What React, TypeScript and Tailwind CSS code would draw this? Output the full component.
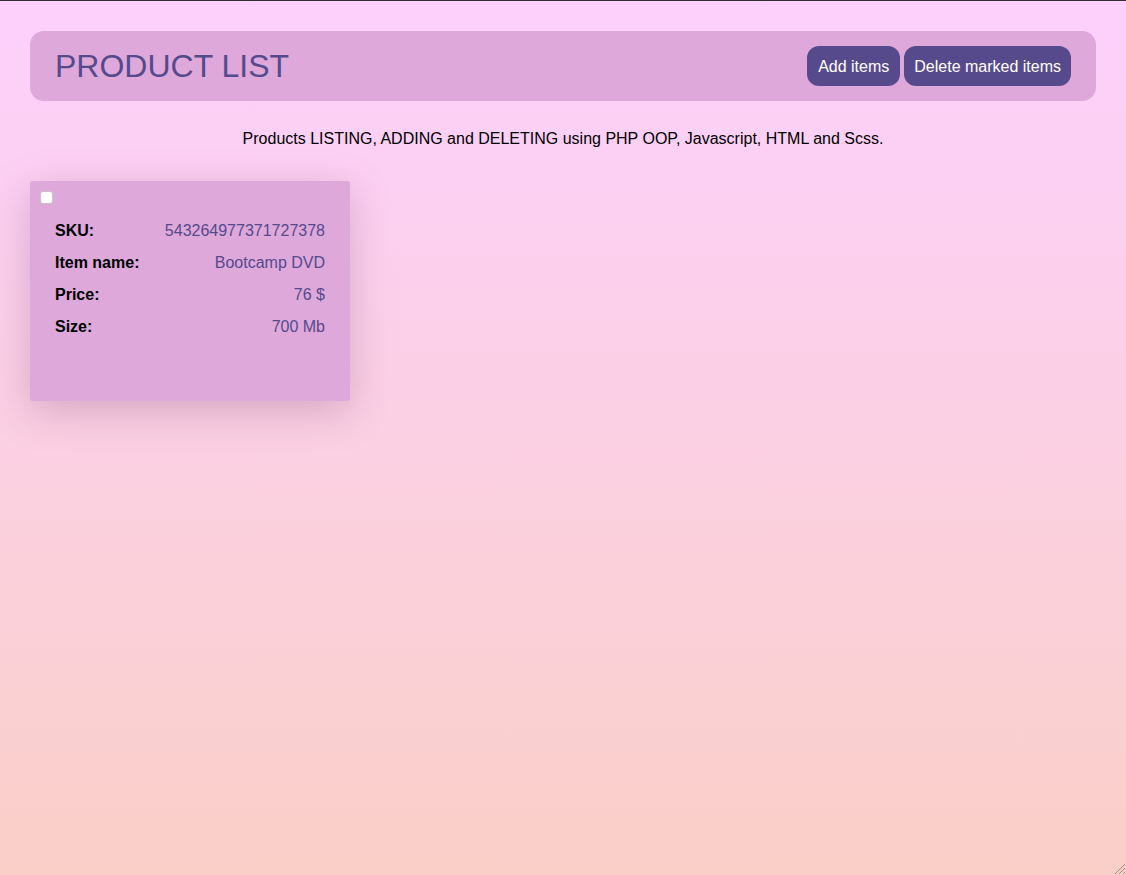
import React from 'react';

const product = {
  sku: '543264977371727378',
  name: 'Bootcamp DVD',
  price: '76 $',
  size: '700 Mb',
};

const Row = ({ label, value }: { label: string; value: string }) => (
  <div className="flex justify-between items-center h-8">
    <span className="font-bold text-black">{label}</span>
    <span className="text-[#554a8c]">{value}</span>
  </div>
);

export default function App() {
  return (
    <div
      className="relative min-h-screen border-t border-[#2e2e2e] bg-gradient-to-b from-[#fdd0fd] to-[#facfc7] px-[30px] pt-[30px] text-[16px]"
      style={{ fontFamily: '"Liberation Sans", Arial, sans-serif' }}
    >
      {/* Header */}
      <header className="flex items-center justify-between h-[70px] rounded-[14px] bg-[#dea8da] pl-[25px] pr-[25px]">
        <h1 className="text-[32px] text-[#554a8c] leading-none">PRODUCT LIST</h1>
        <div className="flex gap-1">
          <button className="h-10 pt-[2px] px-[11px] rounded-[12px] bg-[#564a8c] text-white">Add items</button>
          <button className="h-10 pt-[2px] px-[10px] rounded-[12px] bg-[#564a8c] text-white">
            Delete marked items
          </button>
        </div>
      </header>

      <p className="text-center text-black mt-[29px] leading-[18px]">
        Products LISTING, ADDING and DELETING using PHP OOP, Javascript, HTML and Scss.
      </p>

      {/* Products */}
      <div className="mt-[33px] flex flex-wrap gap-5">
        <div className="w-[320px] h-[220px] rounded-[3px] bg-[#dea8da] shadow-[0_10px_40px_rgba(120,60,110,0.28)] px-[25px] relative">
          <input
            type="checkbox"
            className="absolute left-[10px] top-[10px] w-[13px] h-[13px] appearance-none rounded-[3px] bg-white border border-[#c9c0c8]"
          />
          <div className="pt-[34px]">
            <Row label="SKU:" value={product.sku} />
            <Row label="Item name:" value={product.name} />
            <Row label="Price:" value={product.price} />
            <Row label="Size:" value={product.size} />
          </div>
        </div>
      </div>

      {/* window resize grip */}
      <svg className="absolute right-0 bottom-0" width="14" height="14" viewBox="0 0 14 14">
        <path d="M13 3 L3 13 M13 7 L7 13 M13 11 L11 13" stroke="#9a8f8f" strokeWidth="1" />
      </svg>
    </div>
  );
}
